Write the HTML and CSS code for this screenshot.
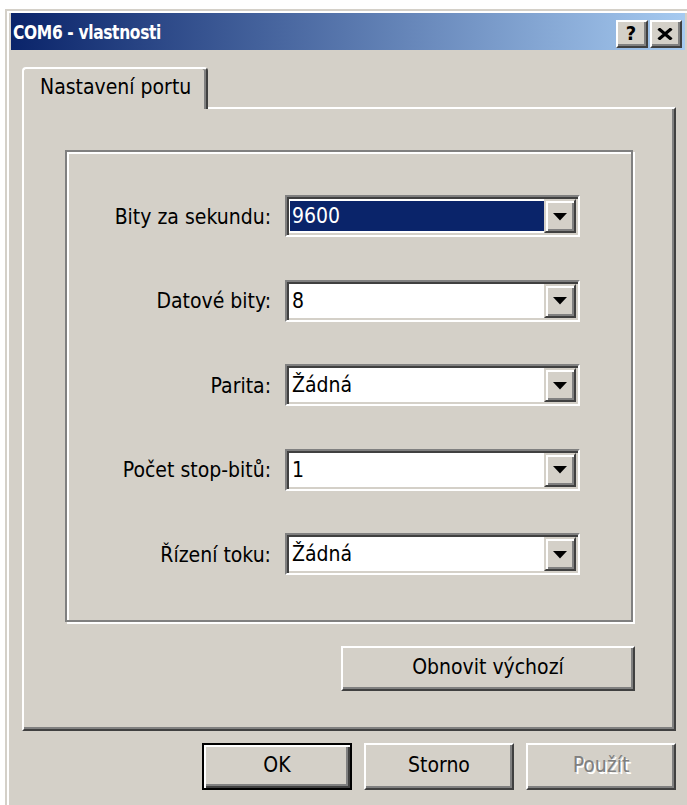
FILE: index.html
```html
<!DOCTYPE html>
<html lang="cs">
<head>
<meta charset="utf-8">
<title>COM6 - vlastnosti</title>
<link rel="stylesheet" href="styles.css">
</head>
<body>
<div class="window">
  <div class="titlebar">
    <span class="title">COM6 - vlastnosti</span>
    <div class="caption-buttons">
      <div class="cap-btn help">?</div>
      <div class="cap-btn close">
        <svg width="16" height="12" viewBox="0 0 16 12"><path d="M1.5 0.5 L14.5 11.5 M14.5 0.5 L1.5 11.5" stroke="#000" stroke-width="3.2" fill="none"/></svg>
      </div>
    </div>
  </div>
  <div class="client">
    <div class="tabs">
      <div class="tab">Nastavení portu</div>
    </div>
    <div class="page">
      <div class="group">
        <span class="field-label">Bity za sekundu:</span>
        <div class="combo">
          <div class="combo-value selected">9600</div>
          <div class="drop-btn"><svg width="14" height="8" viewBox="0 0 14 8"><path d="M0 0 H14 L7 7.5 Z" fill="#000"/></svg></div>
        </div>

        <span class="field-label">Datové bity:</span>
        <div class="combo">
          <div class="combo-value">8</div>
          <div class="drop-btn"><svg width="14" height="8" viewBox="0 0 14 8"><path d="M0 0 H14 L7 7.5 Z" fill="#000"/></svg></div>
        </div>

        <span class="field-label">Parita:</span>
        <div class="combo">
          <div class="combo-value">Žádná</div>
          <div class="drop-btn"><svg width="14" height="8" viewBox="0 0 14 8"><path d="M0 0 H14 L7 7.5 Z" fill="#000"/></svg></div>
        </div>

        <span class="field-label">Počet stop-bitů:</span>
        <div class="combo">
          <div class="combo-value">1</div>
          <div class="drop-btn"><svg width="14" height="8" viewBox="0 0 14 8"><path d="M0 0 H14 L7 7.5 Z" fill="#000"/></svg></div>
        </div>

        <span class="field-label">Řízení toku:</span>
        <div class="combo">
          <div class="combo-value">Žádná</div>
          <div class="drop-btn"><svg width="14" height="8" viewBox="0 0 14 8"><path d="M0 0 H14 L7 7.5 Z" fill="#000"/></svg></div>
        </div>
      </div>
      <div class="btn btn-restore">Obnovit výchozí</div>
    </div>
    <div class="actions">
      <div class="btn btn-action btn-default">OK</div>
      <div class="btn btn-action">Storno</div>
      <div class="btn btn-action disabled">Použít</div>
    </div>
  </div>
</div>
</body>
</html>
```

FILE: styles.css
```css
html, body {
  margin: 0;
  height: 100%;
  overflow: hidden;
  background: #ffffff;
}

body {
  font-family: "DejaVu Sans Condensed", "DejaVu Sans", sans-serif;
  font-stretch: condensed;
  font-size: 21px;
  color: #000;
}

/* dialog frame */
.window {
  margin: 9px 0 0 5px;
  width: 686px;
  height: 810px;
  box-sizing: border-box;
  background: #d4d0c8;
  border-top: 2px solid #d4d0c8;
  border-left: 2px solid #d4d0c8;
  box-shadow: inset 2px 2px #ffffff;
  padding: 2px 6px 0 4px;
}

/* caption */
.titlebar {
  height: 37px;
  display: flex;
  align-items: center;
  justify-content: space-between;
  background: linear-gradient(to right, #0a246a, #a6caf0);
  padding: 0 3px 0 2px;
}

.title {
  color: #fff;
  font-weight: bold;
  font-size: 20px;
  letter-spacing: -0.4px;
  margin-top: 1px;
  display: inline-block;
  transform: scaleX(0.86);
  transform-origin: left center;
}

.caption-buttons {
  display: flex;
  gap: 2px;
  margin-top: 4px;
}

.cap-btn {
  width: 32px;
  height: 28px;
  box-sizing: border-box;
  background: #d4d0c8;
  border: 2px solid;
  border-color: #ffffff #404040 #404040 #ffffff;
  box-shadow: inset -2px -2px #808080;
  display: flex;
  align-items: center;
  justify-content: center;
}

.help {
  font-family: "DejaVu Sans", sans-serif;
  font-weight: bold;
  font-size: 20px;
  line-height: 1;
  padding: 0 2px 2px 0;
}

.close svg {
  display: block;
  margin-right: 2px;
}

/* dialog body */
.client {
  padding: 17px 9px 0 11px;
}

.tabs {
  display: flex;
  height: 40px;
  position: relative;
  z-index: 1;
}

.tab {
  width: 186px;
  height: 42px;
  box-sizing: border-box;
  background: #d4d0c8;
  border-top: 2px solid #ffffff;
  border-left: 2px solid #ffffff;
  border-right: 2px solid #404040;
  border-radius: 4px 4px 0 0;
  box-shadow: inset -2px 0 #808080;
  padding: 0 0 5px 16px;
  display: flex;
  align-items: center;
  white-space: nowrap;
}

.page {
  width: 654px;
  height: 624px;
  box-sizing: border-box;
  border-top: 2px solid #ffffff;
  border-left: 2px solid #ffffff;
  border-right: 2px solid #404040;
  border-bottom: 2px solid #404040;
  box-shadow: inset -2px -2px #808080;
  padding: 41px 39px 0 41px;
  display: flex;
  flex-direction: column;
}

/* etched group frame */
.group {
  width: 568px;
  height: 472px;
  box-sizing: border-box;
  border: 2px solid #808080;
  box-shadow: inset 2px 2px #ffffff, 2px 2px #ffffff;
  display: grid;
  grid-template-columns: 204px 295px;
  column-gap: 14px;
  row-gap: 42.5px;
  align-content: start;
  padding-top: 43px;
}

.field-label {
  justify-self: end;
  align-self: center;
  white-space: nowrap;
  margin-top: 1px;
}

.combo {
  height: 42px;
  box-sizing: border-box;
  border: 2px solid;
  border-color: #808080 #ffffff #ffffff #808080;
  box-shadow: inset 2px 2px #404040, inset -2px -2px #d4d0c8;
  background: #ffffff;
  padding: 2px;
  display: flex;
}

.combo-value {
  flex: 1;
  margin: 2px 0 2px 1px;
  padding-left: 2px;
  display: flex;
  align-items: center;
  white-space: nowrap;
}

.combo-value.selected {
  background: #0a246a;
  color: #ffffff;
}

.drop-btn {
  width: 32px;
  box-sizing: border-box;
  background: #d4d0c8;
  border: 2px solid;
  border-color: #d4d0c8 #404040 #404040 #d4d0c8;
  box-shadow: inset 2px 2px #ffffff, inset -2px -2px #808080;
  display: flex;
  align-items: center;
  justify-content: center;
}

.drop-btn svg {
  display: block;
  margin: 1px 1px 0 0;
}

/* push buttons */
.btn {
  box-sizing: border-box;
  background: #d4d0c8;
  border: 2px solid;
  border-color: #ffffff #404040 #404040 #ffffff;
  box-shadow: inset -2px -2px #808080;
  display: flex;
  align-items: center;
  justify-content: center;
  padding-bottom: 3px;
  white-space: nowrap;
}

.btn-restore {
  align-self: flex-end;
  width: 294px;
  height: 45px;
  margin-top: 24px;
}

.actions {
  display: flex;
  justify-content: flex-end;
  gap: 12px;
  margin-top: 12px;
}

.btn-action {
  width: 150px;
  height: 47px;
}

.btn-default {
  border: 2px solid #000000;
  box-shadow: inset 2px 2px #ffffff, inset -2px -2px #404040, inset -4px -4px #808080;
}

.disabled {
  color: #808080;
  text-shadow: 2px 2px #ffffff;
}
```
